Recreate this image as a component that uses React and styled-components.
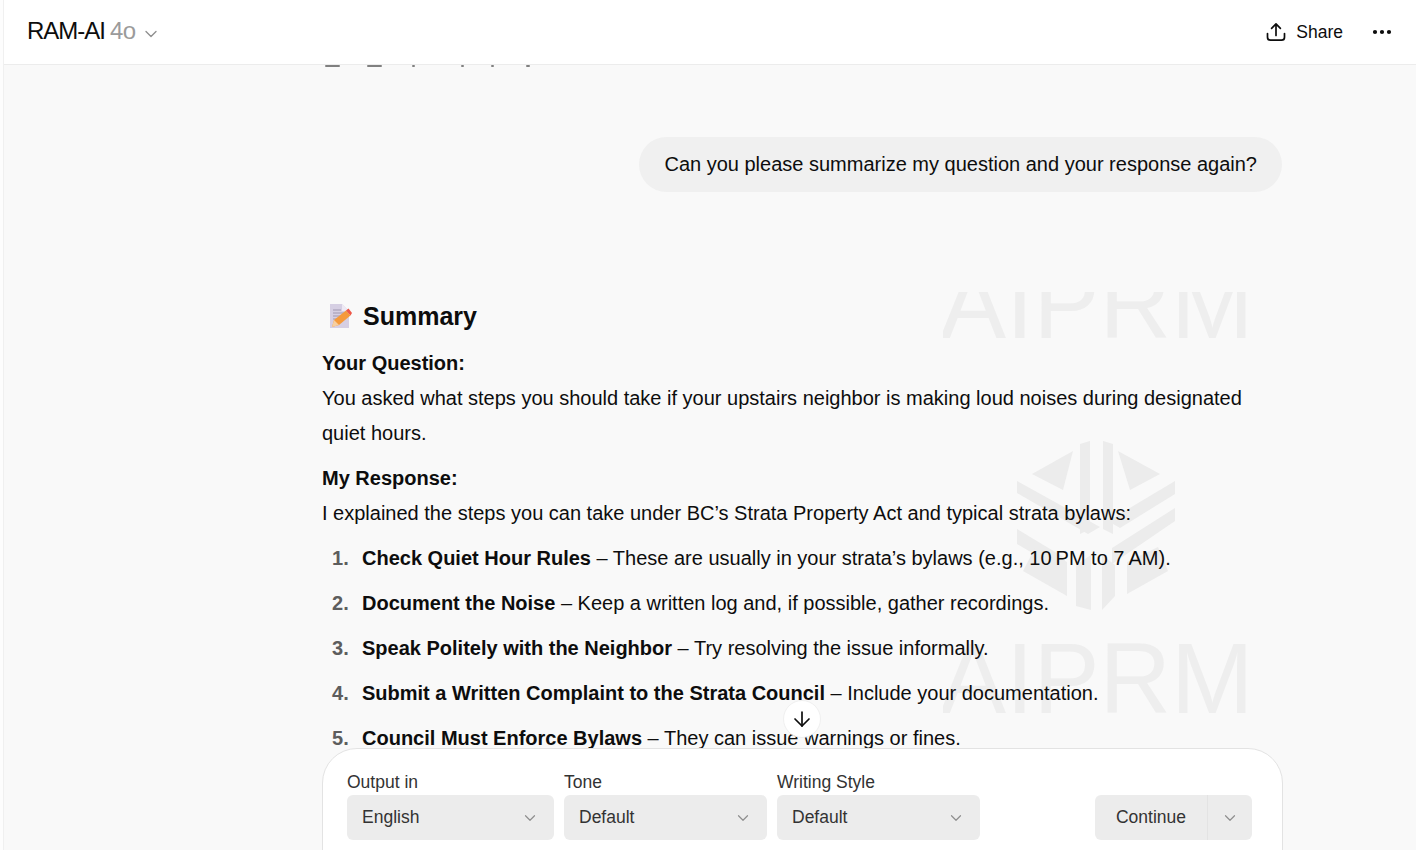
import React from "react";
import styled, { createGlobalStyle } from "styled-components";
import { ArrowDown, ChevronDown, Ellipsis } from "lucide-react";

const GlobalStyle = createGlobalStyle`
	html, body {
		margin: 0;
		padding: 0;
		height: 100%;
		overflow: hidden;
		background: #f9f9f9;
		font-family: "Liberation Sans", Arial, sans-serif;
		color: #0d0d0d;
	}
`;

const Page = styled.div`
	display: flex;
	width: 1416px;
	height: 850px;
	overflow: hidden;
`;

const Rail = styled.div`
	flex: 0 0 3px;
	background: #fdfdfd;
	border-right: 1px solid #f0f0f0;
`;

const Main = styled.main`
	position: relative;
	flex: 1;
	min-width: 0;
	display: flex;
	flex-direction: column;
	background: #f9f9f9;
`;

const Header = styled.header`
	flex: 0 0 64px;
	display: flex;
	align-items: center;
	justify-content: space-between;
	padding: 0 22px 0 23px;
	background: #fff;
	border-bottom: 1px solid #ececec;
`;

const ModelSwitch = styled.div`
	display: flex;
	align-items: center;
	padding-bottom: 2px;
	font-size: 24px;
	letter-spacing: -1px;
	color: #0d0d0d;
	span {
		margin-left: 5px;
		letter-spacing: -0.6px;
		color: #9b9b9b;
	}
	svg {
		margin-left: 5px;
		margin-top: 5px;
		color: #8f8f8f;
	}
`;

const HeaderActions = styled.div`
	display: flex;
	align-items: center;
`;

const ShareButton = styled.div`
	display: flex;
	align-items: center;
	gap: 10px;
	font-size: 17.5px;
	color: #0d0d0d;
	margin-right: 27px;
`;

const Scroll = styled.div`
	flex: 1;
	min-height: 0;
	overflow: hidden;
	padding-left: 184px;
`;

const Column = styled.div`
	width: 960px;
	margin: 0 auto;
`;

const ActionRow = styled.div`
	display: flex;
	height: 2px;
`;

const ActionMark = styled.i`
	display: block;
	width: ${(p) => p.$w}px;
	height: 1.5px;
	margin-left: ${(p) => p.$gap}px;
	background: #808080;
	border-radius: 1px;
`;

const UserRow = styled.div`
	display: flex;
	justify-content: flex-end;
	margin-top: 70px;
`;

const Bubble = styled.div`
	padding: 10px 25px;
	font-size: 20px;
	line-height: 35px;
	background: #f0f0f0;
	border-radius: 28px;
`;

const Message = styled.article`
	position: relative;
	margin-top: 100px;
	font-size: 20px;
	line-height: 35px;
`;

const Watermark = styled.div`
	position: absolute;
	top: 0;
	left: 621px;
	width: 306px;
	height: 460px;
	overflow: hidden;
	pointer-events: none;
	svg {
		position: absolute;
		top: 148px;
		left: 74px;
	}
`;

const WatermarkWord = styled.div`
	position: absolute;
	left: -3px;
	top: ${(p) => p.$top}px;
	font-size: 100px;
	line-height: 100px;
	white-space: nowrap;
	color: #eeeeee;
	transform: scaleX(0.99);
	transform-origin: left top;
`;

const Content = styled.div`
	position: relative;
`;

const Heading = styled.h3`
	display: flex;
	align-items: center;
	gap: 11px;
	height: 48px;
	margin: 0 0 6px;
	font-size: 25px;
	font-weight: 700;
	svg {
		margin-left: 7px;
	}
`;

const Paragraph = styled.p`
	margin: 0 0 10px;
`;

const Steps = styled.ol`
	margin: 0;
	padding: 0 0 0 40px;
	list-style: none;
	li {
		margin-bottom: 10px;
	}
	li::before {
		content: counter(list-item) ".";
		display: inline-block;
		width: 30px;
		margin-left: -30px;
		font-weight: 700;
		color: #5d5d5d;
	}
`;

const Dock = styled.div`
	flex: 0 0 102px;
	overflow: hidden;
	padding-left: 318px;
`;

const Composer = styled.div`
	box-sizing: border-box;
	width: 961px;
	height: 160px;
	padding: 22px 30px 0 24px;
	background: #fff;
	border: 1px solid #e3e3e3;
	border-radius: 35px;
`;

const Controls = styled.div`
	display: flex;
	align-items: flex-start;
	height: 70px;
`;

const Field = styled.div`
	width: ${(p) => p.$w}px;
	margin-right: 10px;
`;

const FieldLabel = styled.div`
	height: 24px;
	font-size: 17.5px;
	line-height: 22px;
	color: #333;
`;

const Select = styled.div`
	box-sizing: border-box;
	height: 45px;
	display: flex;
	align-items: center;
	justify-content: space-between;
	padding: 0 15px;
	font-size: 17.5px;
	color: #333;
	background: #ececec;
	border-radius: 6px;
	svg {
		color: #8f8f8f;
	}
`;

const SplitButton = styled.div`
	display: flex;
	width: 157px;
	height: 45px;
	margin: 24px 0 0 auto;
	font-size: 17.5px;
	color: #333;
	background: #ececec;
	border-radius: 6px;
	div {
		display: flex;
		align-items: center;
		justify-content: center;
	}
	div:first-child {
		flex: 0 0 112px;
		border-right: 1px solid #e3e3e3;
	}
	div:last-child {
		flex: 1;
		color: #8f8f8f;
	}
`;

const ScrollButton = styled.div`
	position: absolute;
	left: 50%;
	top: 700px;
	box-sizing: border-box;
	width: 38px;
	height: 38px;
	margin-left: 73px;
	display: flex;
	align-items: center;
	justify-content: center;
	background: #fff;
	border: 1px solid #f0f0f0;
	border-radius: 50%;
	color: #0d0d0d;
`;

function ShareIcon() {
	return (
		<svg width="20" height="20" viewBox="0 0 20 20" fill="none" stroke="#0d0d0d" strokeWidth="1.7" strokeLinecap="round" strokeLinejoin="round">
			<path d="M1.5 11.5v3.7a3 3 0 0 0 3 3h11a3 3 0 0 0 3-3v-3.7" />
			<path d="M10 13.5V2M5.600 6.300 10 1.900l4.400 4.400" />
		</svg>
	);
}

function MemoIcon() {
	return (
		<svg width="23" height="26" viewBox="0 0 23 26">
			<path d="M1 1h12l7 7v17H1z" fill="#d6cfe3" />
			<path d="M13 1l7 7h-7z" fill="#eee9f4" />
			<path d="M4 7h8M4 10h12M4 13h10M4 16h6" stroke="#a097b0" strokeWidth="1" />
			<path d="M3 24l2-7L17 7.500l4.500 5L10 22z" fill="#f59a3c" />
			<path d="M17 7.500l2.500-2 3.500 4.500-1.500 2.500z" fill="#ee5648" />
			<path d="M3 24l2-7 5 5z" fill="#f7cfa0" />
		</svg>
	);
}

// faded hexagon mark behind the answer
function WatermarkLogo() {
	return (
		<svg width="160" height="170" viewBox="17 9 160 170" fill="#ececec">
			<path d="M80 13l10-3v88l-10 5zM103 10l10 3v90l-10-5z" />
			<path d="M73 20 32 43l31 16zM118 20l42 23-30 16z" />
			<path d="M17 50v12l71 41 12-7zM175 50v13l-55 34-12-7z" />
			<path d="M175 77v13l-63 43v-16zM17 98v15l48 28v-14z" />
			<path d="M23 140l13-25 31 16v34zM127 163l41-23-10-24-31 15z" />
			<path d="M76 134l15-10v55l-15-4zM102 124l13 10v31l-13 14z" />
		</svg>
	);
}

const steps = [
	["Check Quiet Hour Rules", " – These are usually in your strata’s bylaws (e.g., 10\u202FPM to 7\u202FAM)."],
	["Document the Noise", " – Keep a written log and, if possible, gather recordings."],
	["Speak Politely with the Neighbor", " – Try resolving the issue informally."],
	["Submit a Written Complaint to the Strata Council", " – Include your documentation."],
	["Council Must Enforce Bylaws", " – They can issue warnings or fines."],
];

const marks = [
	[3, 15],
	[27, 15],
	[30, 3],
	[46, 3],
	[27, 3],
	[32, 4],
];

export default function App() {
	return (
		<Page>
			<GlobalStyle />
			<Rail />
			<Main>
				<Header>
					<ModelSwitch>
						RAM-AI<span>4o</span>
						<ChevronDown size={20} strokeWidth={1.6} />
					</ModelSwitch>
					<HeaderActions>
						<ShareButton>
							<ShareIcon />
							Share
						</ShareButton>
						<Ellipsis size={24} strokeWidth={2.2} color="#0d0d0d" />
					</HeaderActions>
				</Header>
				<Scroll>
					<Column>
						<ActionRow>
							{marks.map(([gap, w], i) => (
								<ActionMark key={i} $gap={gap} $w={w} />
							))}
						</ActionRow>
						<UserRow>
							<Bubble>Can you please summarize my question and your response again?</Bubble>
						</UserRow>
						<Message>
							<Watermark>
								<WatermarkWord $top={-39}>AIPRM</WatermarkWord>
								<WatermarkLogo />
								<WatermarkWord $top={336}>AIPRM</WatermarkWord>
							</Watermark>
							<Content>
								<Heading>
									<MemoIcon />
									Summary
								</Heading>
								<Paragraph>
									<strong>Your Question:</strong>
									<br />
									You asked what steps you should take if your upstairs neighbor is making loud noises during designated quiet hours.
								</Paragraph>
								<Paragraph>
									<strong>My Response:</strong>
									<br />I explained the steps you can take under BC’s Strata Property Act and typical strata bylaws:
								</Paragraph>
								<Steps>
									{steps.map(([title, rest]) => (
										<li key={title}>
											<strong>{title}</strong>
											{rest}
										</li>
									))}
								</Steps>
							</Content>
						</Message>
					</Column>
				</Scroll>
				<Dock>
					<Composer>
						<Controls>
							<Field $w={207}>
								<FieldLabel>Output in</FieldLabel>
								<Select>
									English
									<ChevronDown size={18} strokeWidth={1.6} />
								</Select>
							</Field>
							<Field $w={203}>
								<FieldLabel>Tone</FieldLabel>
								<Select>
									Default
									<ChevronDown size={18} strokeWidth={1.6} />
								</Select>
							</Field>
							<Field $w={203}>
								<FieldLabel>Writing Style</FieldLabel>
								<Select>
									Default
									<ChevronDown size={18} strokeWidth={1.6} />
								</Select>
							</Field>
							<SplitButton>
								<div>Continue</div>
								<div>
									<ChevronDown size={18} strokeWidth={1.6} />
								</div>
							</SplitButton>
						</Controls>
					</Composer>
				</Dock>
				<ScrollButton>
					<ArrowDown size={24} strokeWidth={1.7} />
				</ScrollButton>
			</Main>
		</Page>
	);
}
